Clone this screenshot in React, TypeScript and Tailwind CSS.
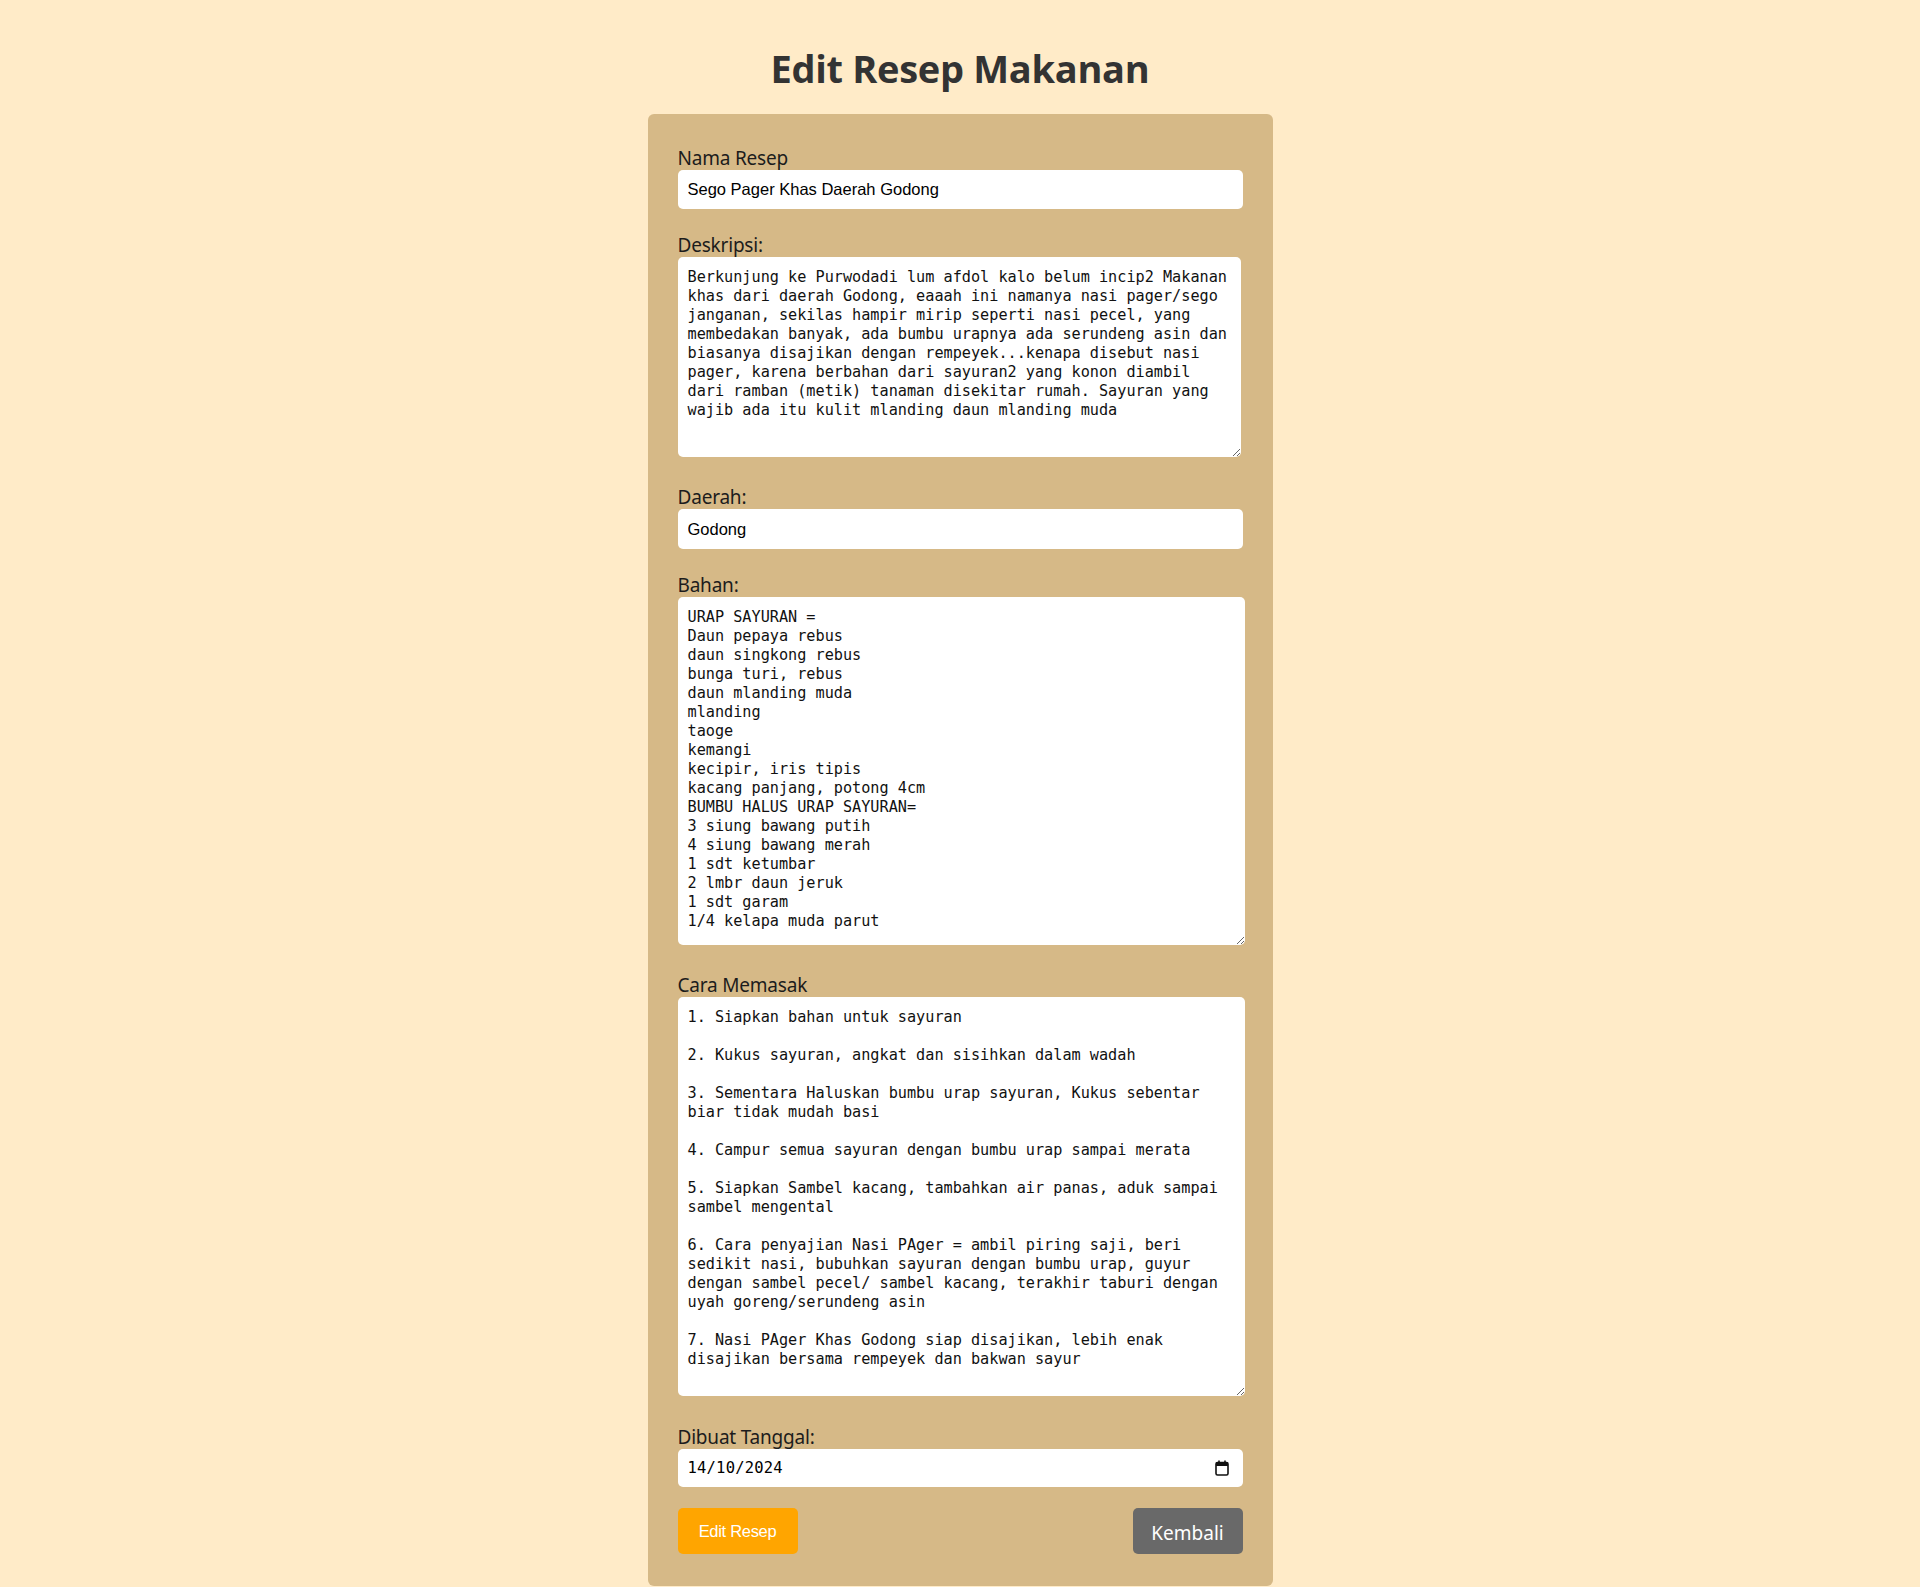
import React from "react";

// ─── Data ──────────────────────────────────────────────────────

const DESKRIPSI =
  "Berkunjung ke Purwodadi lum afdol kalo belum incip2 Makanan khas dari daerah Godong, eaaah ini namanya nasi pager/sego janganan, sekilas hampir mirip seperti nasi pecel, yang membedakan banyak, ada bumbu urapnya ada serundeng asin dan biasanya disajikan dengan rempeyek...kenapa disebut nasi pager, karena berbahan dari sayuran2 yang konon diambil dari ramban (metik) tanaman disekitar rumah. Sayuran yang wajib ada itu kulit mlanding daun mlanding muda";

const BAHAN = [
  "URAP SAYURAN =",
  "Daun pepaya rebus",
  "daun singkong rebus",
  "bunga turi, rebus",
  "daun mlanding muda",
  "mlanding",
  "taoge",
  "kemangi",
  "kecipir, iris tipis",
  "kacang panjang, potong 4cm",
  "BUMBU HALUS URAP SAYURAN=",
  "3 siung bawang putih",
  "4 siung bawang merah",
  "1 sdt ketumbar",
  "2 lmbr daun jeruk",
  "1 sdt garam",
  "1/4 kelapa muda parut",
].join("\n");

const CARA = [
  "1. Siapkan bahan untuk sayuran",
  "2. Kukus sayuran, angkat dan sisihkan dalam wadah",
  "3. Sementara Haluskan bumbu urap sayuran, Kukus sebentar biar tidak mudah basi",
  "4. Campur semua sayuran dengan bumbu urap sampai merata",
  "5. Siapkan Sambel kacang, tambahkan air panas, aduk sampai sambel mengental",
  "6. Cara penyajian Nasi PAger = ambil piring saji, beri sedikit nasi, bubuhkan sayuran dengan bumbu urap, guyur dengan sambel pecel/ sambel kacang, terakhir taburi dengan uyah goreng/serundeng asin",
  "7. Nasi PAger Khas Godong siap disajikan, lebih enak disajikan bersama rempeyek dan bakwan sayur",
].join("\n\n");

// ─── Components ────────────────────────────────────────────────

const labelCls =
  "block text-[19px] leading-[24px] text-[#1c1c1c] [font-family:'Noto_Sans',sans-serif] tracking-[-0.2px]";
const inputCls =
  "block w-full h-[39px] rounded-[5px] bg-white px-[10px] text-[16.5px] text-black outline-none [font-family:'Liberation_Sans',Arial,sans-serif]";
const areaCls =
  "block rounded-[5px] bg-white pl-[10px] pr-[8px] pt-[11px] pb-[9px] text-[15.2px] leading-[19px] text-[#111] outline-none [font-family:'DejaVu_Sans_Mono',monospace]";

export default function App() {
  return (
    <main className="min-h-screen bg-[#ffebc8] flex flex-col items-center pt-[44px]">
      <h1 className="text-[38px] leading-[48px] font-bold text-[#333] [font-family:'Open_Sans',sans-serif] tracking-[-0.3px]">
        Edit Resep Makanan
      </h1>

      <form className="mt-[22px] w-[625px] rounded-[6px] bg-[#d6b987] px-[30px] pt-[32px] pb-[32px]">
        {/* Nama */}
        <label className={labelCls}>Nama Resep</label>
        <input className={inputCls} defaultValue="Sego Pager Khas Daerah Godong" />

        {/* Deskripsi */}
        <label className={`${labelCls} mt-[24px]`}>Deskripsi:</label>
        <textarea
          className={`${areaCls} w-[563px] h-[200px]`}
          defaultValue={DESKRIPSI}
        />

        {/* Daerah */}
        <label className={`${labelCls} mt-[28px]`}>Daerah:</label>
        <input className={`${inputCls} h-[40px]`} defaultValue="Godong" />

        {/* Bahan */}
        <label className={`${labelCls} mt-[24px]`}>Bahan:</label>
        <textarea className={`${areaCls} w-[567px] h-[348px]`} defaultValue={BAHAN} />

        {/* Cara */}
        <label className={`${labelCls} mt-[28px]`}>Cara Memasak</label>
        <textarea className={`${areaCls} w-[567px] h-[399px]`} defaultValue={CARA} />

        {/* Tanggal */}
        <label className={`${labelCls} mt-[29px]`}>Dibuat Tanggal:</label>
        <div className="flex h-[38px] w-full items-center justify-between rounded-[5px] bg-white pl-[10px] pr-[14px]">
          <input
            readOnly
            className="w-[200px] bg-transparent pt-[2px] text-[15.5px] text-black outline-none [font-family:'DejaVu_Sans_Mono',monospace] tracking-[0.2px]"
            defaultValue="14/10/2024"
          />
          <svg width="14" height="16" viewBox="0 0 14 16" fill="none">
            <rect x="1" y="2.5" width="12" height="12.5" rx="1.5" stroke="#111" strokeWidth="1.6" />
            <rect x="1" y="2.5" width="12" height="3.5" fill="#111" />
            <line x1="4" y1="0.5" x2="4" y2="3" stroke="#111" strokeWidth="1.6" />
            <line x1="10" y1="0.5" x2="10" y2="3" stroke="#111" strokeWidth="1.6" />
          </svg>
        </div>

        {/* Actions */}
        <div className="mt-[21px] flex items-center justify-between">
          <button
            type="button"
            className="h-[46px] w-[120px] rounded-[5px] bg-[#ffa500] text-[16.5px] text-white [font-family:'Liberation_Sans',Arial,sans-serif] tracking-[-0.3px]"
          >
            Edit Resep
          </button>
          <button
            type="button"
            className="h-[46px] w-[110px] rounded-[5px] bg-[#696969] pt-[4px] text-[19px] text-white [font-family:'Noto_Sans',sans-serif]"
          >
            Kembali
          </button>
        </div>
      </form>
    </main>
  );
}
